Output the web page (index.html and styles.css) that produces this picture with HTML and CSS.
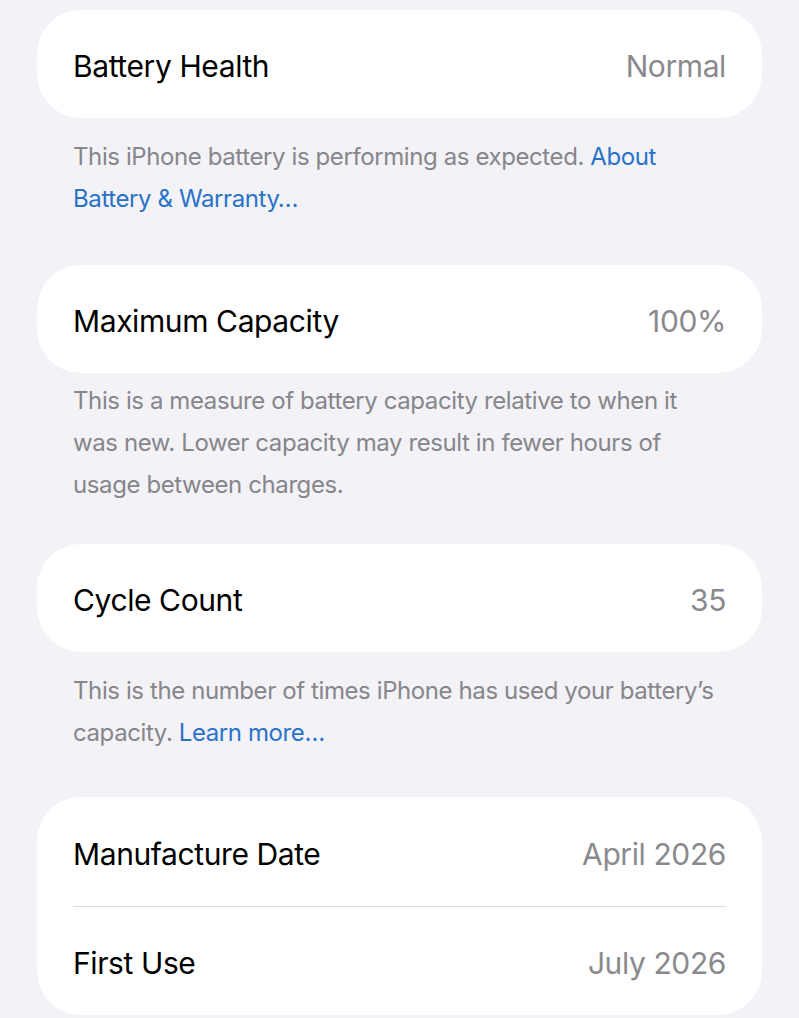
FILE: index.html
```html
<!DOCTYPE html>
<html lang="en">
<head>
<meta charset="utf-8">
<title>Battery Health</title>
<link rel="stylesheet" href="styles.css">
</head>
<body>
<main class="page">
  <section class="group group-health">
    <div class="card">
      <div class="row"><span class="label">Battery Health</span><span class="value">Normal</span></div>
    </div>
    <p class="footer">This iPhone battery is performing as expected. <a class="link" href="#">About Battery &amp; Warranty…</a></p>
  </section>

  <section class="group group-capacity">
    <div class="card">
      <div class="row"><span class="label">Maximum Capacity</span><span class="value">100%</span></div>
    </div>
    <p class="footer">This is a measure of battery capacity relative to when it was new. Lower capacity may result in fewer hours of usage between charges.</p>
  </section>

  <section class="group group-cycle">
    <div class="card">
      <div class="row"><span class="label">Cycle Count</span><span class="value">35</span></div>
    </div>
    <p class="footer">This is the number of times iPhone has used your battery’s capacity. <a class="link" href="#">Learn more…</a></p>
  </section>

  <section class="group group-dates">
    <div class="card">
      <div class="row"><span class="label">Manufacture Date</span><span class="value">April 2026</span></div>
      <div class="row"><span class="label">First Use</span><span class="value">July 2026</span></div>
    </div>
  </section>
</main>
</body>
</html>
```

FILE: styles.css
```css
html, body {
  margin: 0;
  padding: 0;
  background: #f2f2f7;
}

body {
  font-family: Inter, "Liberation Sans", Arial, sans-serif;
  -webkit-font-smoothing: antialiased;
}

.page {
  padding: 10px 37px 0 37px;
  display: flex;
  flex-direction: column;
}

.group {
  display: flex;
  flex-direction: column;
}

.card {
  background: #ffffff;
  border-radius: 44px;
  padding: 0 36px;
  display: flex;
  flex-direction: column;
}

.row {
  height: 108px;
  box-sizing: border-box;
  padding-top: 4px;
  display: flex;
  align-items: center;
  justify-content: space-between;
  font-size: 30px;
  letter-spacing: -0.4px;
}

.group-dates .row {
  height: 109px;
}

.row + .row {
  border-top: 1px solid #dcdce0;
}

.label {
  color: #000000;
}

.value {
  color: #8a8a8e;
}

.footer {
  margin: 0;
  padding: 0 36px;
  font-size: 24px;
  line-height: 42px;
  letter-spacing: -0.4px;
  color: #86868b;
}

.link {
  color: #2a72c8;
  text-decoration: none;
}

.group-health .footer { margin-top: 18px; margin-bottom: 45px; }
.group-capacity .footer { margin-top: 7px; margin-bottom: 38px; }
.group-cycle .footer { margin-top: 18px; margin-bottom: 43px; }
```
